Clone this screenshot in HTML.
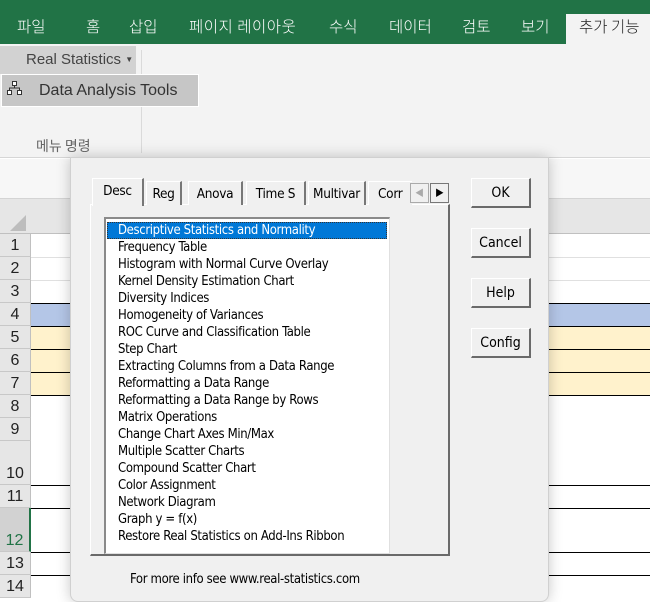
<!DOCTYPE html><html><head><meta charset="utf-8"><style>
*{margin:0;padding:0;box-sizing:border-box}
body{width:650px;height:594px;overflow:hidden;position:relative;background:#fff;font-family:"Liberation Sans","Noto Sans CJK KR",sans-serif}
.a{position:absolute}
.tabk{position:absolute;top:15px;color:#fff;font-size:15.5px;font-family:"Noto Sans CJK KR","Liberation Sans",sans-serif;font-weight:300}
.rh{position:absolute;left:0;width:31px;background:#e6e6e6;border-bottom:1px solid #c8c8c8;border-right:1px solid #c0c0c0;font-size:16px;color:#222;text-align:center;display:flex;align-items:flex-end;justify-content:center;padding-bottom:1px}
.hl{position:absolute;left:31px;right:0;height:1px;background:#000}
.tab{position:absolute;top:181px;height:24px;background:#f0f0f0;border-top:1px solid #fff;border-left:1px solid #fff;border-right:2px solid #777;font-size:13.5px;font-family:"DejaVu Sans Condensed","Liberation Sans",sans-serif;letter-spacing:-0.3px;text-align:center;line-height:24px;color:#000}
.btn{position:absolute;left:471px;width:60px;height:30px;background:#f0f0f0;border-top:1px solid #fff;border-left:1px solid #fff;border-right:2px solid #6a6a6a;border-bottom:2px solid #6a6a6a;font-size:14px;font-family:"DejaVu Sans Condensed","Liberation Sans",sans-serif;text-align:center;line-height:28px}
.li{height:17px;line-height:17px;padding-left:11px;font-size:13px;font-family:"DejaVu Sans Condensed","Liberation Sans",sans-serif;letter-spacing:-0.35px;white-space:nowrap;color:#000}
</style></head><body>
<div class="a" style="left:0;top:0;width:650px;height:44px;background:#217346"></div>
<div class="a" style="left:566px;top:14px;width:84px;height:30px;background:#f3f3f3"></div>
<div class="tabk" style="left:17px">파일</div>
<div class="tabk" style="left:86px">홈</div>
<div class="tabk" style="left:129px">삽입</div>
<div class="tabk" style="left:189px;letter-spacing:0.5px">페이지 레이아웃</div>
<div class="tabk" style="left:329px">수식</div>
<div class="tabk" style="left:389px">데이터</div>
<div class="tabk" style="left:462px">검토</div>
<div class="tabk" style="left:521px">보기</div>
<div class="tabk" style="left:579px;color:#222">추가 기능</div>
<div class="a" style="left:0;top:44px;width:650px;height:114px;background:#f3f3f3;border-bottom:1px solid #d6d6d6"></div>
<div class="a" style="left:141px;top:50px;width:1px;height:103px;background:#dadada"></div>
<div class="a" style="left:0;top:46px;width:136px;height:28px;background:#d2d2d2;font-size:15px;color:#444;line-height:28px;padding-left:26px">Real Statistics <span style="font-size:8px;vertical-align:2px">▼</span></div>
<div class="a" style="left:1px;top:74px;width:198px;height:33px;background:#c6c6c6;border:1px solid #fff;font-size:16px;color:#333;line-height:31px;padding-left:37px">Data Analysis Tools</div>
<svg class="a" style="left:7px;top:81px" width="16" height="15" viewBox="0 0 16 15"><rect x="5.5" y="0.5" width="4" height="4" fill="#fff" stroke="#333"/><rect x="0.5" y="9.5" width="4" height="4" fill="#fff" stroke="#333"/><rect x="10.5" y="9.5" width="4" height="4" fill="#fff" stroke="#333"/><path d="M7.5 4.5V7M2.5 9.5V7H12.5V9.5" stroke="#333" fill="none"/></svg>
<div class="a" style="left:36px;top:136px;font-size:14px;color:#666;font-family:'Noto Sans CJK KR',sans-serif">메뉴 명령</div>
<div class="a" style="left:0;top:159px;width:650px;height:40px;background:#f7f7f7"></div>
<div class="a" style="left:0;top:198px;width:650px;height:36px;background:#e6e6e6;border-top:1px solid #d4d4d4;border-bottom:1px solid #c0c0c0"></div>
<svg class="a" style="left:10px;top:215px" width="16" height="16"><path d="M16 0V16H0Z" fill="#bdbdbd"/></svg>
<div class="a" style="left:31px;top:303px;width:619px;height:23px;background:#b4c6e7"></div>
<div class="a" style="left:31px;top:326px;width:619px;height:69px;background:#fff2cc"></div>
<div class="a" style="left:31px;top:257px;width:619px;height:1px;background:#e0e0e0"></div>
<div class="a" style="left:31px;top:280px;width:619px;height:1px;background:#e0e0e0"></div>
<div class="hl" style="top:303px"></div><div class="hl" style="top:326px"></div><div class="hl" style="top:349px"></div><div class="hl" style="top:372px"></div><div class="hl" style="top:395px"></div><div class="hl" style="top:485px"></div><div class="hl" style="top:508px"></div><div class="hl" style="top:552px"></div><div class="hl" style="top:575px"></div>
<div class="rh" style="top:234px;height:23px">1</div>
<div class="rh" style="top:257px;height:23px">2</div>
<div class="rh" style="top:280px;height:23px">3</div>
<div class="rh" style="top:303px;height:23px">4</div>
<div class="rh" style="top:326px;height:23px">5</div>
<div class="rh" style="top:349px;height:23px">6</div>
<div class="rh" style="top:372px;height:23px">7</div>
<div class="rh" style="top:395px;height:23px">8</div>
<div class="rh" style="top:418px;height:23px">9</div>
<div class="rh" style="top:441px;height:44px">10</div>
<div class="rh" style="top:485px;height:23px">11</div>
<div class="rh" style="top:508px;height:44px;background:#d2d2d2;color:#217346;border-right:2px solid #217346">12</div>
<div class="rh" style="top:552px;height:23px">13</div>
<div class="rh" style="top:575px;height:23px">14</div>
<div class="a" style="left:70px;top:157px;width:479px;height:445px;background:#f0f0f0;border:1px solid #d0d0d0;border-radius:0 0 8px 8px;box-shadow:0 0 14px rgba(0,0,0,0.22)"></div>
<div class="a" style="left:90px;top:204px;width:360px;height:352px;border-top:1px solid #fff;border-left:1px solid #fff;border-right:2px solid #6a6a6a;border-bottom:2px solid #6a6a6a"></div>
<div class="tab" style="left:146px;width:36px">Reg</div>
<div class="tab" style="left:188px;width:55px">Anova</div>
<div class="tab" style="left:246px;width:60px">Time S</div>
<div class="tab" style="left:308px;width:58px">Multivar</div>
<div class="tab" style="left:368px;width:44px;border-right:none;text-align:left;padding-left:9px">Corr</div>
<div class="tab" style="left:92px;top:178px;width:52px;height:28px;border-bottom:none;line-height:24px">Desc</div>
<div class="a" style="left:410px;top:183px;width:19px;height:20px;background:#f0f0f0;border:1px solid #aaa;font-size:9px;color:#aaa;text-align:center;line-height:18px">◀</div>
<div class="a" style="left:430px;top:183px;width:19px;height:20px;background:#f0f0f0;border:1px solid #777;font-size:9px;color:#000;text-align:center;line-height:18px">▶</div>
<div class="a" style="left:104px;top:217px;width:286px;height:337px;background:#fff;border-top:2px solid #8a8a8a;border-left:2px solid #8a8a8a;border-right:1px solid #e0e0e0;border-bottom:1px solid #e0e0e0;padding:3px 2px 0 1px">
<div class="li" style="background:#0078d7;color:#fff;outline:1px dotted #333;outline-offset:-1px;width:280px">Descriptive Statistics and Normality</div>
<div class="li">Frequency Table</div>
<div class="li">Histogram with Normal Curve Overlay</div>
<div class="li">Kernel Density Estimation Chart</div>
<div class="li">Diversity Indices</div>
<div class="li">Homogeneity of Variances</div>
<div class="li">ROC Curve and Classification Table</div>
<div class="li">Step Chart</div>
<div class="li">Extracting Columns from a Data Range</div>
<div class="li">Reformatting a Data Range</div>
<div class="li">Reformatting a Data Range by Rows</div>
<div class="li">Matrix Operations</div>
<div class="li">Change Chart Axes Min/Max</div>
<div class="li">Multiple Scatter Charts</div>
<div class="li">Compound Scatter Chart</div>
<div class="li">Color Assignment</div>
<div class="li">Network Diagram</div>
<div class="li">Graph y = f(x)</div>
<div class="li">Restore Real Statistics on Add-Ins Ribbon</div>
</div>
<div class="btn" style="top:178px">OK</div>
<div class="btn" style="top:228px">Cancel</div>
<div class="btn" style="top:278px">Help</div>
<div class="btn" style="top:328px">Config</div>
<div class="a" style="left:130px;top:572px;font-size:13px;font-family:'DejaVu Sans Condensed','Liberation Sans',sans-serif;letter-spacing:-0.35px;color:#000">For more info see www.real-statistics.com</div>
</body></html>
